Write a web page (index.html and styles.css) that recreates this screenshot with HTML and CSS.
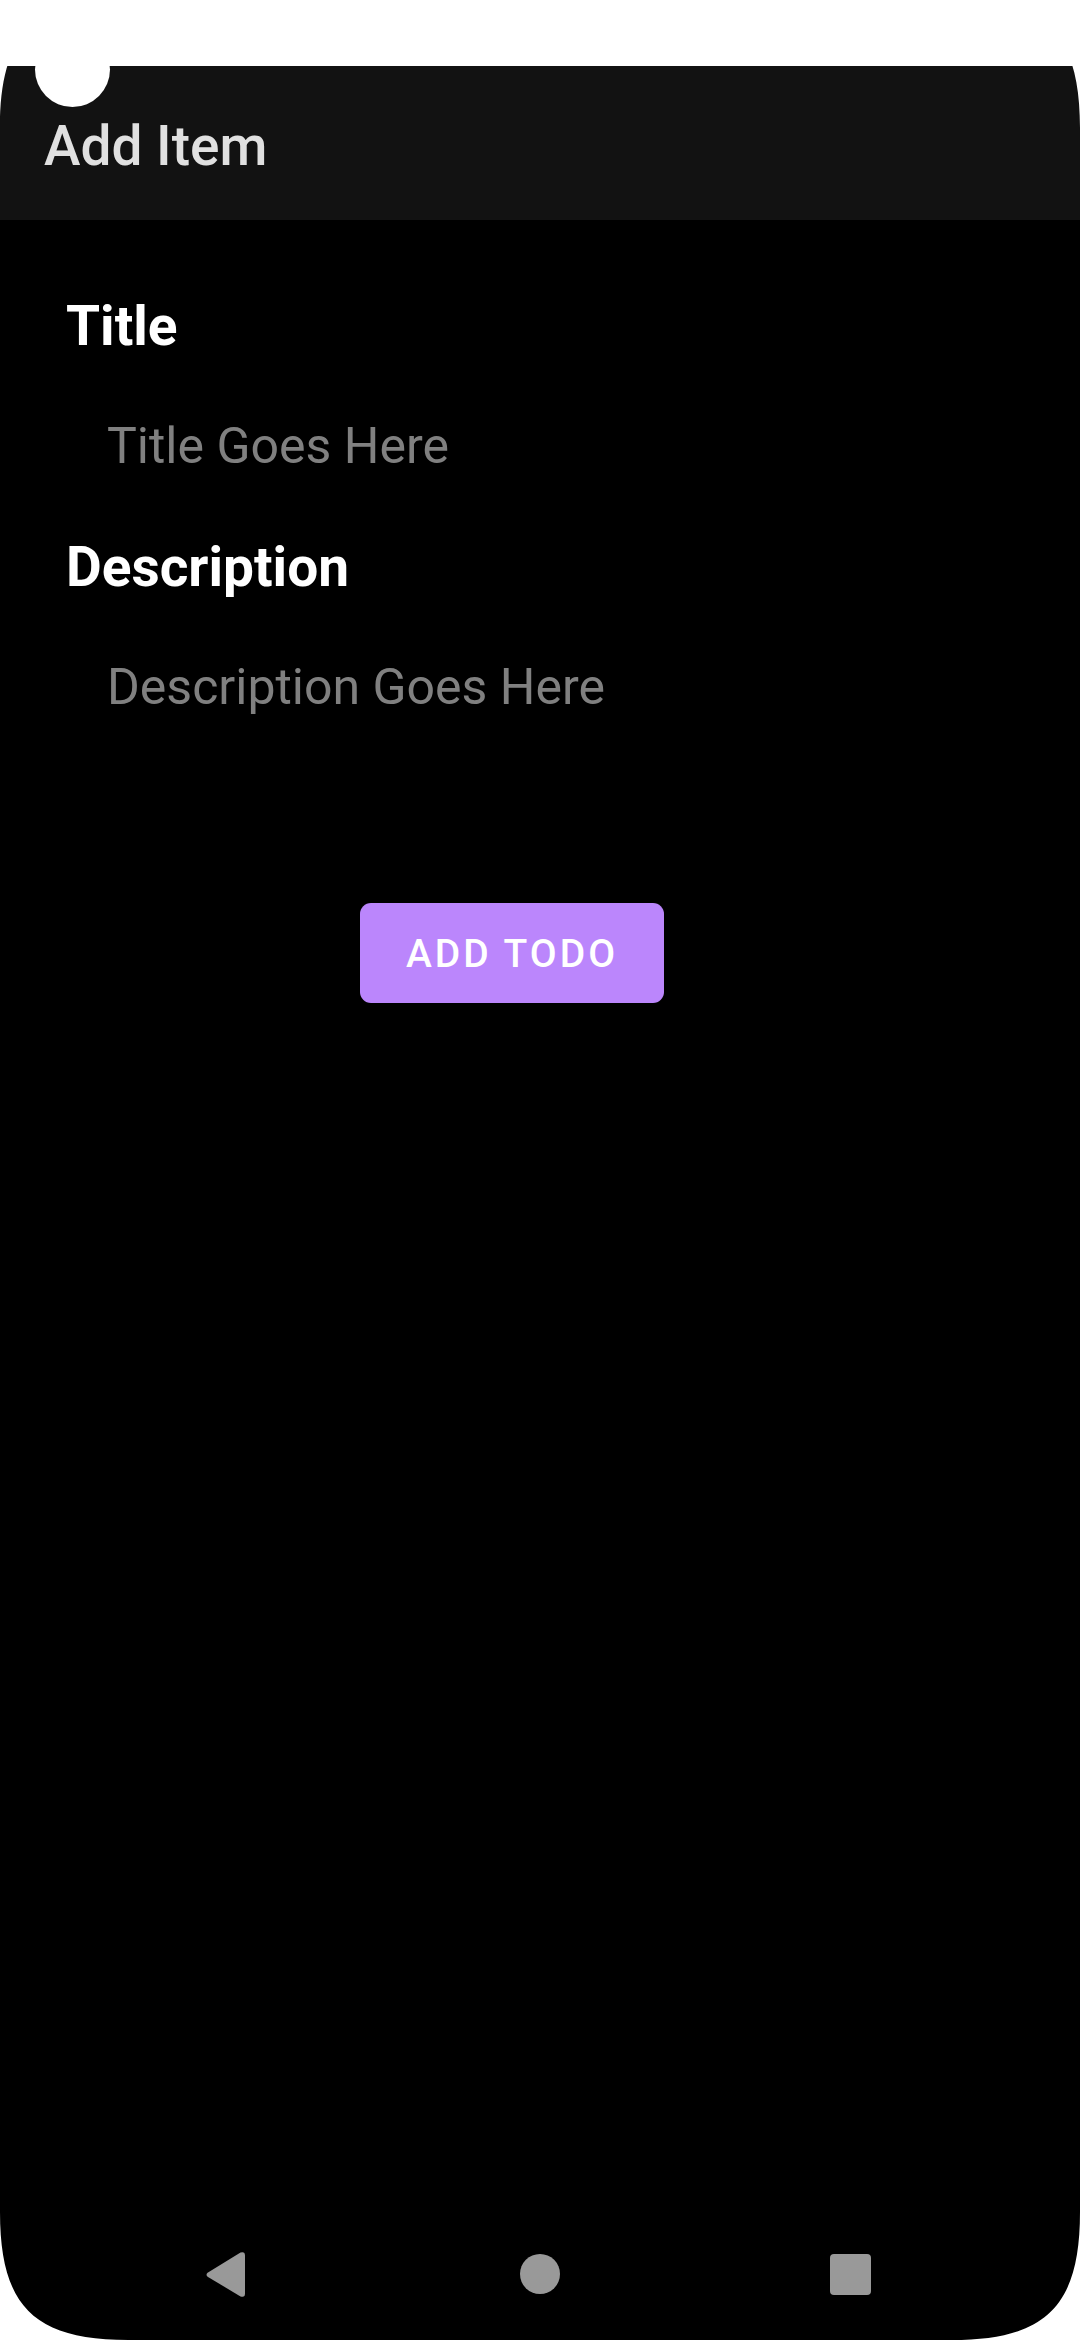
FILE: index.html
```html
<!DOCTYPE html>
<html lang="en">
<head>
  <meta charset="utf-8">
  <meta name="viewport" content="width=device-width, initial-scale=1">
  <title>Add Item</title>
  <link rel="stylesheet" href="styles.css">
</head>
<body>
  <div class="screen">
    <div class="status-bar"><span class="camera"></span></div>
    <header class="app-bar">
      <h1 class="app-title">Add Item</h1>
    </header>
    <main class="content">
      <form class="form">
        <div class="field">
          <label class="label" for="title">Title</label>
          <input class="input" id="title" type="text" placeholder="Title Goes Here">
        </div>
        <div class="field">
          <label class="label" for="description">Description</label>
          <input class="input" id="description" type="text" placeholder="Description Goes Here">
        </div>
        <div class="actions">
          <button class="submit" type="button">ADD TODO</button>
        </div>
      </form>
    </main>
    <nav class="nav-bar" aria-label="System">
      <button class="nav-button" type="button" aria-label="Back">
        <svg class="nav-icon" viewBox="0 0 66 66"><path d="M13 31.5Q10 33.500 13 36L45.500 55.400Q50 57 50 52.500V14.500Q50 10 45.500 11.500Z"/></svg>
      </button>
      <button class="nav-button" type="button" aria-label="Home">
        <svg class="nav-icon" viewBox="0 0 66 66"><circle cx="33" cy="33" r="20"/></svg>
      </button>
      <button class="nav-button" type="button" aria-label="Overview">
        <svg class="nav-icon" viewBox="0 0 66 66"><rect x="11" y="13" width="41" height="41" rx="4"/></svg>
      </button>
    </nav>
    <svg class="corner corner-tl" viewBox="0 0 128 128"><path d="M0 0H128C34 0 0 34 0 128Z"/></svg>
    <svg class="corner corner-tr" viewBox="0 0 128 128"><path d="M128 0H0C94 0 128 34 128 128Z"/></svg>
    <svg class="corner corner-bl" viewBox="0 0 128 128"><path d="M0 128V0C0 94 34 128 128 128Z"/></svg>
    <svg class="corner corner-br" viewBox="0 0 128 128"><path d="M128 128V0C128 94 94 128 0 128Z"/></svg>
  </div>
</body>
</html>
```

FILE: styles.css
```css
* {
  box-sizing: border-box;
}

body {
  margin: 0;
  background: #fff;
  font-family: Roboto, sans-serif;
}

.screen {
  position: relative;
  display: flex;
  flex-direction: column;
  min-height: 100vh;
  background: #000;
}

.status-bar {
  position: relative;
  height: 66px;
  background: #fff;
}

.camera {
  position: absolute;
  top: 32px;
  left: 35px;
  width: 75px;
  height: 75px;
  border-radius: 50%;
  background: #fff;
}

.app-bar {
  display: flex;
  align-items: center;
  height: 154px;
  padding: 6px 44px 0;
  background: #121212;
}

.app-title {
  margin: 0;
  color: #e0e0e0;
  font-size: 55px;
  font-weight: 500;
  line-height: 64px;
}

.content {
  flex: 1;
  padding-top: 74px;
}

.field {
  display: flex;
  flex-direction: column;
  gap: 29px;
  padding: 0 66px 30px;
}

.label {
  color: #fff;
  font-size: 55px;
  font-weight: 700;
  line-height: 64px;
}

.input {
  width: 100%;
  height: 118px;
  padding: 0 41px;
  border: 0;
  background: transparent;
  color: #fff;
  font-family: inherit;
  font-size: 50px;
}

.input::placeholder {
  color: #808080;
  opacity: 1;
}

.actions {
  padding: 127px 0 0 calc(100% / 3);
}

.submit {
  height: 100px;
  padding: 2px 46px 0;
  border: 0;
  border-radius: 11px;
  background: #bb86fc;
  color: #fff;
  font-family: inherit;
  font-size: 39px;
  font-weight: 500;
  letter-spacing: 3px;
}

.nav-bar {
  display: flex;
  height: 132px;
  padding: 0 72px;
}

.nav-button {
  display: flex;
  flex: 1;
  align-items: center;
  justify-content: center;
  padding: 0;
  border: 0;
  background: transparent;
}

.nav-icon {
  width: 66px;
  height: 66px;
  fill: #999;
}

.corner {
  position: absolute;
  width: 128px;
  height: 128px;
  fill: #fff;
  pointer-events: none;
}

.corner-tl {
  top: 0;
  left: 0;
}

.corner-tr {
  top: 0;
  right: 0;
}

.corner-bl {
  bottom: 0;
  left: 0;
}

.corner-br {
  right: 0;
  bottom: 0;
}
```
